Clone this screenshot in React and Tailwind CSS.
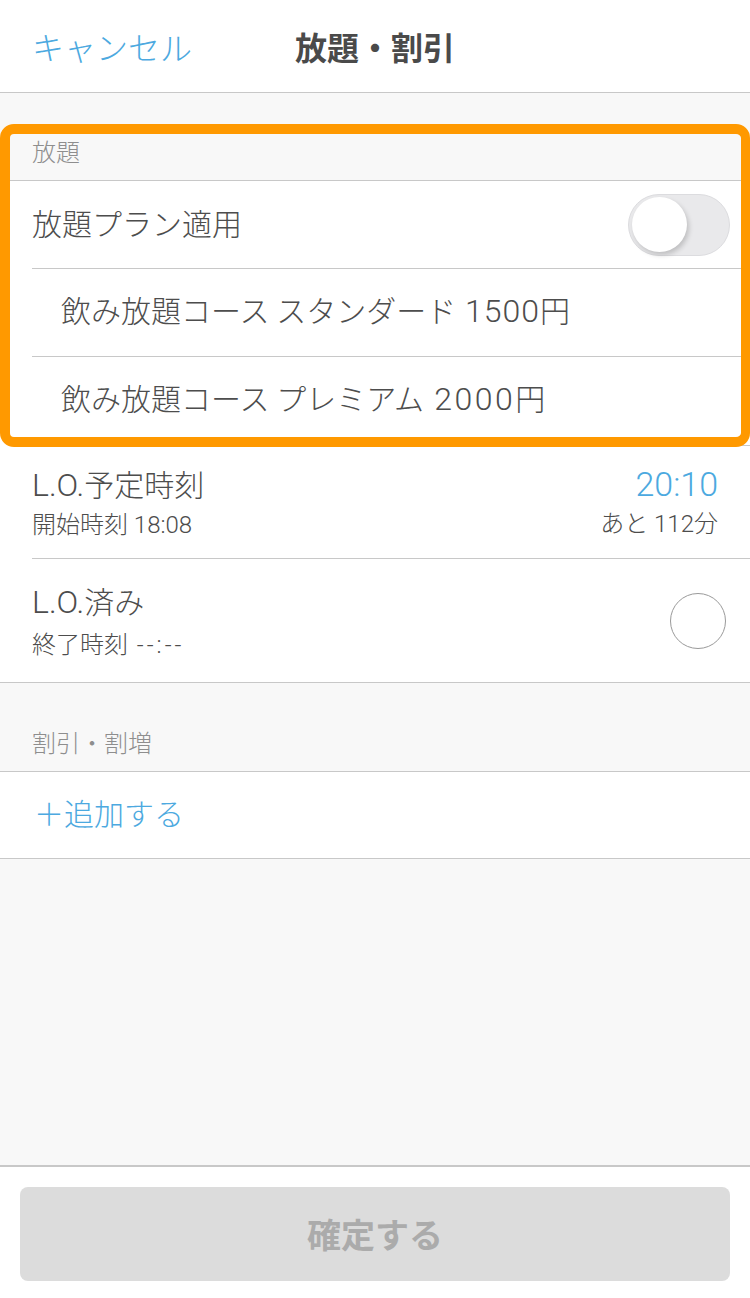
import React from "react";

const CJK = { fontFamily: '"Noto Sans CJK JP", sans-serif' };
const LAT = { fontFamily: 'Roboto, "Liberation Sans", "Noto Sans CJK JP", sans-serif' };

function L({ children, size = "lg", className = "" }) {
  return (
    <span style={LAT} className={(size === "lg" ? "text-[32px] " : "text-[24px] ") + className}>
      {children}
    </span>
  );
}

function Toggle() {
  return (
    <div className="relative h-[62px] w-[102px] rounded-full border border-[#dcdcdf] bg-[#e9e9eb]">
      <div className="absolute left-[3px] top-[2px] h-[55px] w-[55px] rounded-full bg-white shadow-[2px_3px_5px_rgba(0,0,0,0.18)]" />
    </div>
  );
}

export default function App() {
  return (
    <div className="relative flex h-[1298px] w-[750px] flex-col overflow-hidden bg-[#f8f8f8] font-light text-[#4d4d4d]" style={CJK}>
      {/* Nav bar */}
      <div className="relative flex h-[93px] shrink-0 items-center border-b border-[#c8c8c8] bg-white">
        <span className="pl-[32px] text-[32px] leading-[32px] text-[#4ca9e0]">キャンセル</span>
        <span className="pointer-events-none absolute left-0 right-0 text-center text-[32px] font-bold leading-[32px] text-[#4a4a4a]">放題・割引</span>
      </div>

      {/* Section header 放題 */}
      <div className="flex h-[88px] shrink-0 items-end border-b border-[#c8c8c8] pb-[17px] pl-[32px]">
        <span className="text-[24px] leading-[24px] text-[#8e8e8e]">放題</span>
      </div>

      {/* Rows */}
      <div className="shrink-0 bg-white pl-[32px]">
        <div className="flex h-[88px] items-center justify-between border-b border-[#c8c8c8] pr-[20px]">
          <span className="mb-[6px] text-[30px] leading-[30px]">放題プラン適用</span>
          <Toggle />
        </div>
        <div className="flex h-[88px] items-center border-b border-[#c8c8c8] pl-[29px]">
          <span className="mb-[6px] text-[30px] leading-[30px]">
            飲み放題コース スタンダード<L className="tracking-[1px]"> 1500</L>円
          </span>
        </div>
        <div className="flex h-[89px] items-center border-b border-[#c8c8c8] pl-[29px]">
          <span className="mb-[6px] text-[30px] leading-[30px]">
            飲み放題コース プレミアム<L className="tracking-[2.5px]"> 2000</L>円
          </span>
        </div>
        <div className="flex h-[113px] items-center justify-between border-b border-[#c8c8c8] pr-[32px]">
          <div className="flex flex-col">
            <span className="text-[30px] leading-[30px]">
              <L>L.O.</L>予定時刻
            </span>
            <span className="mt-[11px] text-[24px] leading-[24px]">
              開始時刻<L size="sm"> 18:08</L>
            </span>
          </div>
          <div className="flex flex-col items-end">
            <span style={LAT} className="text-[34px] leading-[30px] text-[#4ca9e0]">20:10</span>
            <span className="mt-[11px] text-[24px] leading-[24px]">
              あと<L size="sm"> 112</L>分
            </span>
          </div>
        </div>
        <div className="flex h-[123px] items-center justify-between pr-[24px]">
          <div className="flex flex-col">
            <span className="text-[30px] leading-[30px]">
              <L>L.O.</L>済み
            </span>
            <span className="mt-[14px] text-[24px] leading-[24px]">
              終了時刻<L size="sm" className="tracking-[3px]"> --:--</L>
            </span>
          </div>
          <div className="h-[56px] w-[56px] rounded-full border border-[#9a9a9a]" />
        </div>
      </div>
      <div className="h-px shrink-0 bg-[#c8c8c8]" />

      {/* Section header 割引・割増 */}
      <div className="flex h-[89px] shrink-0 items-end border-b border-[#c8c8c8] pb-[17px] pl-[32px]">
        <span className="text-[24px] leading-[24px] text-[#8e8e8e]">割引・割増</span>
      </div>
      <div className="flex h-[87px] shrink-0 items-center border-b border-[#c8c8c8] bg-white pl-[34px]">
        <span className="mb-[6px] text-[30px] leading-[30px] text-[#4ca9e0]">＋追加する</span>
      </div>

      <div className="flex-1" />

      {/* Footer */}
      <div className="flex h-[133px] shrink-0 flex-col border-t-2 border-[#c8c8c8] bg-white px-[20px] pt-[20px]">
        <div className="flex h-[94px] items-center justify-center rounded-[8px] bg-[#dcdcdc]">
          <span className="text-[34px] font-bold leading-[34px] text-[#ababab]">確定する</span>
        </div>
      </div>

      {/* Highlight overlay */}
      <div className="pointer-events-none absolute left-0 top-[124px] h-[323px] w-[750px] rounded-[14px] border-[10px] border-r-[9px] border-[#ff9900]" />
    </div>
  );
}
